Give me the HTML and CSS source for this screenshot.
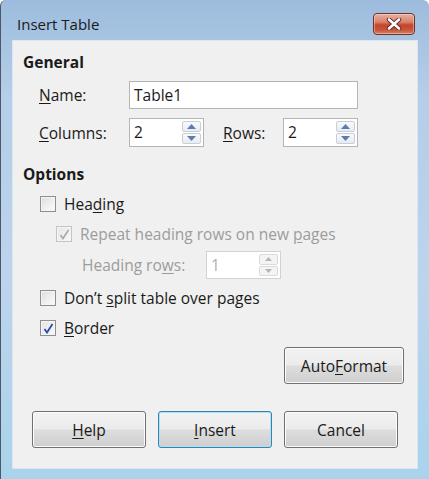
FILE: index.html
```html
<!DOCTYPE html>
<html lang="en">
<head>
    <meta charset="UTF-8">
    <title>Insert Table</title>
    <link rel="stylesheet" href="styles.css">
</head>
<body>
    <div class="window">
        <div class="titlebar">
            <span class="title">Insert Table</span>
            <button class="close" aria-label="Close">
                <svg width="18" height="12" viewBox="0 0 18 12">
                    <path d="M4 1.5 L14 10.5 M14 1.5 L4 10.5" stroke="#5a2a22" stroke-width="4.4" stroke-linecap="round"/>
                    <path d="M4 1.5 L14 10.5 M14 1.5 L4 10.5" stroke="#fff" stroke-width="2.6" stroke-linecap="round"/>
                </svg>
            </button>
        </div>

        <div class="client">
            <!-- General -->
            <div class="section-title">General</div>
            <div class="row name-row">
                <span class="label"><u>N</u>ame:</span>
                <div class="field">Table1</div>
            </div>
            <div class="row size-row">
                <span class="label"><u>C</u>olumns:</span>
                <div class="spin">
                    <span class="spin-value">2</span>
                    <span class="spin-btns">
                        <span class="spin-btn"><svg width="9" height="5" viewBox="0 0 9 5"><path d="M0 5 L4.5 0 L9 5Z" fill="#5b7bb3"/></svg></span>
                        <span class="spin-btn"><svg width="9" height="5" viewBox="0 0 9 5"><path d="M0 0 L4.5 5 L9 0Z" fill="#5b7bb3"/></svg></span>
                    </span>
                </div>
                <span class="label rows-label"><u>R</u>ows:</span>
                <div class="spin">
                    <span class="spin-value">2</span>
                    <span class="spin-btns">
                        <span class="spin-btn"><svg width="9" height="5" viewBox="0 0 9 5"><path d="M0 5 L4.5 0 L9 5Z" fill="#5b7bb3"/></svg></span>
                        <span class="spin-btn"><svg width="9" height="5" viewBox="0 0 9 5"><path d="M0 0 L4.5 5 L9 0Z" fill="#5b7bb3"/></svg></span>
                    </span>
                </div>
            </div>

            <!-- Options -->
            <div class="section-title options-title">Options</div>
            <div class="check-row">
                <span class="checkbox"></span>
                <span>Hea<u>d</u>ing</span>
            </div>
            <div class="check-row sub disabled">
                <span class="checkbox checked"><svg width="11" height="11" viewBox="0 0 11 11"><path d="M1.5 6 L4 9.5 L9.5 1" fill="none" stroke="#a9a9a9" stroke-width="1.6"/></svg></span>
                <span>Repeat heading rows on new <u>p</u>ages</span>
            </div>
            <div class="row heading-rows disabled">
                <span class="label"><span>Heading ro<u>w</u>s:</span></span>
                <div class="spin">
                    <span class="spin-value">1</span>
                    <span class="spin-btns">
                        <span class="spin-btn"><svg width="7" height="4" viewBox="0 0 9 5"><path d="M0 5 L4.5 0 L9 5Z" fill="#b5b5b5"/></svg></span>
                        <span class="spin-btn"><svg width="7" height="4" viewBox="0 0 9 5"><path d="M0 0 L4.5 5 L9 0Z" fill="#b5b5b5"/></svg></span>
                    </span>
                </div>
            </div>
            <div class="check-row split-row">
                <span class="checkbox"></span>
                <span>Don’t <u>s</u>plit table over pages</span>
            </div>
            <div class="check-row">
                <span class="checkbox checked"><svg width="11" height="11" viewBox="0 0 11 11"><path d="M1.5 6 L4 9.5 L9.5 1" fill="none" stroke="#2a4ea8" stroke-width="1.8"/></svg></span>
                <span><u>B</u>order</span>
            </div>

            <div class="autoformat-row">
                <button class="btn autoformat">Auto<u>F</u>ormat</button>
            </div>

            <div class="button-row">
                <button class="btn"><u>H</u>elp</button>
                <button class="btn default"><u>I</u>nsert</button>
                <button class="btn">Cancel</button>
            </div>
        </div>
    </div>
</body>
</html>
```

FILE: styles.css
```css
* {
    margin: 0;
    padding: 0;
    box-sizing: border-box;
}

body {
    font-family: "Open Sans", "Noto Sans", sans-serif;
    font-size: 15.5px;
    color: #1a1a1a;
    background: #fff;
}

u {
    text-decoration: underline;
    text-underline-offset: 2px;
}

/* Window frame */
.window {
    width: 429px;
    height: 479px;
    display: flex;
    flex-direction: column;
    padding: 0 11px 10px 11px;
    background: linear-gradient(180deg, #9dbcdd 0%, #b5cee9 20%, #bcd4ec 60%, #a9d3ec 100%);
    border-left: 1px solid #4a5868;
    border-radius: 6px 6px 0 0;
}

.titlebar {
    height: 40px;
    display: flex;
    align-items: flex-start;
    justify-content: space-between;
    flex-shrink: 0;
}

.title {
    margin: 14px 0 0 5px;
    font-size: 15px;
    color: #1a1a1a;
}

.close {
    margin-top: 13px;
    margin-right: 3px;
    width: 42px;
    height: 22px;
    border: 1px solid #6e3328;
    border-radius: 4px;
    background: linear-gradient(180deg, #eab1a2 0%, #d9826c 40%, #c5452b 55%, #c9553a 80%, #d98064 100%);
    box-shadow: inset 0 0 0 1px rgba(255, 255, 255, 0.35);
    display: flex;
    align-items: center;
    justify-content: center;
}

/* Client area */
.client {
    flex: 1;
    background: #f0f0f0;
    border: 1px solid #dbe6f1;
    padding: 11px 0 0 0;
}

.section-title {
    height: 20px;
    line-height: 20px;
    padding-left: 10px;
    font-weight: 700;
    font-size: 15.5px;
}

.options-title {
    margin-top: 17px;
}

.row {
    display: flex;
    align-items: center;
    padding-left: 26px;
}

.name-row {
    margin-top: 9px;
    height: 28px;
}

.size-row {
    margin-top: 9px;
    height: 29px;
}

.label {
    width: 90px;
    flex-shrink: 0;
}

.rows-label {
    width: 60px;
    margin-left: 19px;
}

.field {
    width: 229px;
    height: 28px;
    background: #fff;
    border: 1px solid #b5b5b5;
    padding-left: 4px;
    line-height: 26px;
}

/* Spin box */
.spin {
    width: 75px;
    height: 29px;
    background: #fff;
    border: 1px solid #b5b5b5;
    display: flex;
    align-items: stretch;
}

.spin-value {
    flex: 1;
    padding-left: 4px;
    line-height: 27px;
}

.spin-btns {
    width: 21px;
    display: flex;
    flex-direction: column;
    gap: 1px;
    padding: 2px 2px 2px 0;
}

.spin-btn {
    flex: 1;
    display: flex;
    align-items: center;
    justify-content: center;
    border: 1px solid #c9cfd8;
    border-radius: 2px;
    background: linear-gradient(180deg, #f8f9fb 0%, #e8ebef 100%);
}

/* Checkboxes */
.check-row {
    height: 30px;
    display: flex;
    align-items: center;
    gap: 8px;
    padding-left: 27px;
}

.options-title + .check-row {
    margin-top: 5px;
}

.check-row.sub {
    padding-left: 43px;
}

.checkbox {
    width: 16px;
    height: 16px;
    border: 1px solid #8e8f8f;
    background: linear-gradient(135deg, #dcdcdc 0%, #f4f4f4 70%, #fafafa 100%);
    box-shadow: inset 0 0 0 1px #f4f4f4;
    display: flex;
    align-items: center;
    justify-content: center;
    flex-shrink: 0;
}

.checkbox.checked {
    background: linear-gradient(135deg, #e6e6e6 0%, #f8f8f8 100%);
}

.disabled {
    color: #9c9c9c;
}

.disabled .checkbox {
    border-color: #c4c4c4;
}

.heading-rows {
    height: 32px;
    padding-left: 69px;
}

.heading-rows .label {
    width: 124px;
}

.heading-rows .spin {
    height: 28px;
    border-color: #d2d2d2;
}

.heading-rows .spin-value {
    color: #b0b0b0;
}

.heading-rows .spin-btn {
    border-color: #dadada;
    background: #f4f4f4;
}

.split-row {
    margin-top: 2px;
}

/* Buttons */
.btn {
    font-family: inherit;
    font-size: 15.5px;
    color: #1a1a1a;
    height: 37px;
    border: 1px solid #707070;
    border-radius: 3px;
    background: linear-gradient(180deg, #f3f3f3 0%, #ebebeb 48%, #dddddd 52%, #cfcfcf 100%);
    box-shadow: inset 0 0 0 1px #fcfcfc;
}

.autoformat-row {
    display: flex;
    justify-content: flex-end;
    padding-right: 13px;
    margin-top: 4px;
}

.autoformat {
    width: 120px;
}

.button-row {
    display: flex;
    gap: 12px;
    padding-left: 19px;
    margin-top: 27px;
}

.button-row .btn {
    width: 114px;
}

.btn.default {
    border-color: #3c7fb1;
    box-shadow: inset 0 0 0 1px #a8e3f8;
}
```
